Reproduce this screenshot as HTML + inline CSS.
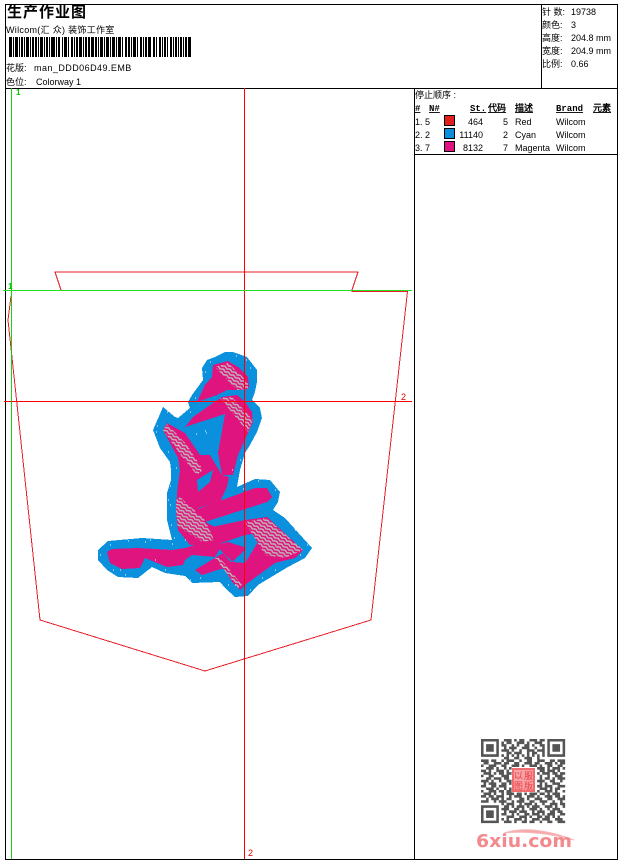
<!DOCTYPE html>
<html><head><meta charset="utf-8"><style>
html,body{margin:0;padding:0;background:#fff;width:620px;height:860px;overflow:hidden}
svg{display:block}
text{font-family:"Liberation Sans","WenQuanYi Zen Hei","Noto Sans CJK SC",sans-serif;font-size:9px;fill:#000}
.b{font-weight:bold;text-decoration:underline;font-family:"Liberation Mono","WenQuanYi Zen Hei",monospace}
</style></head><body>
<svg width="620" height="860" viewBox="0 0 620 860" xmlns="http://www.w3.org/2000/svg" shape-rendering="crispEdges">
<defs>
<pattern id="h" width="6" height="3.4" patternUnits="userSpaceOnUse" patternTransform="rotate(30)">
<rect width="6" height="3.4" fill="#e0147f"/><path d="M0 .6L3 2.2L6 .6" fill="none" stroke="#bdb4b6" stroke-width="1.5"/>
</pattern>
</defs>
<rect x="5.5" y="4.5" width="612" height="855" fill="#fff" stroke="#000"/>
<path d="M5 88.5H618M541.5 4V88M414.5 88V860M414 154.5H618" stroke="#000" fill="none"/>
<text x="7" y="17" style="font-size:15px;font-weight:bold;letter-spacing:1px;font-family:'WenQuanYi Zen Hei','Noto Sans CJK SC',sans-serif">生产作业图</text>
<text x="6" y="33" style="letter-spacing:.3px">Wilcom(汇 众) 装饰工作室</text>
<path fill="#000" d="M9 37h3v20h-3zM13 37h1v20h-1zM15 37h3v20h-3zM19 37h1v20h-1zM21 37h2v20h-2zM24 37h1v20h-1zM26 37h3v20h-3zM30 37h1v20h-1zM32 37h2v20h-2zM35 37h2v20h-2zM38 37h1v20h-1zM40 37h3v20h-3zM44 37h1v20h-1zM46 37h2v20h-2zM49 37h1v20h-1zM51 37h4v20h-4zM56 37h1v20h-1zM58 37h2v20h-2zM62 37h1v20h-1zM64 37h3v20h-3zM68 37h1v20h-1zM71 37h2v20h-2zM74 37h1v20h-1zM76 37h2v20h-2zM79 37h3v20h-3zM83 37h1v20h-1zM85 37h2v20h-2zM88 37h2v20h-2zM91 37h3v20h-3zM95 37h2v20h-2zM98 37h1v20h-1zM100 37h3v20h-3zM104 37h1v20h-1zM106 37h3v20h-3zM110 37h1v20h-1zM112 37h3v20h-3zM116 37h1v20h-1zM118 37h3v20h-3zM122 37h1v20h-1zM125 37h2v20h-2zM128 37h2v20h-2zM131 37h1v20h-1zM133 37h3v20h-3zM137 37h1v20h-1zM140 37h2v20h-2zM143 37h1v20h-1zM145 37h2v20h-2zM148 37h3v20h-3zM153 37h2v20h-2zM156 37h1v20h-1zM159 37h2v20h-2zM162 37h1v20h-1zM164 37h2v20h-2zM167 37h1v20h-1zM170 37h2v20h-2zM173 37h1v20h-1zM175 37h2v20h-2zM178 37h1v20h-1zM180 37h2v20h-2zM183 37h1v20h-1zM185 37h2v20h-2zM188 37h3v20h-3z"/>
<text x="6" y="71">花版:</text><text x="34" y="71" style="letter-spacing:.45px">man_DDD06D49.EMB</text>
<text x="6" y="85">色位:</text><text x="36" y="85">Colorway 1</text>
<text x="542" y="15">针 数:</text><text x="571" y="15">19738</text>
<text x="542" y="28">颜色:</text><text x="571" y="28">3</text>
<text x="542" y="41">高度:</text><text x="571" y="41">204.8 mm</text>
<text x="542" y="54">宽度:</text><text x="571" y="54">204.9 mm</text>
<text x="542" y="67">比例:</text><text x="571" y="67">0.66</text>
<text x="415" y="98">停止顺序 :</text>
<text class="b" x="415" y="111">#</text><text class="b" x="429" y="111">N#</text><text class="b" x="470" y="111">St.</text><text class="b" x="488" y="111">代码</text><text class="b" x="515" y="111">描述</text><text class="b" x="556" y="111">Brand</text><text class="b" x="593" y="111">元素</text>
<g>
<text x="415" y="125">1.  5</text><rect x="444.5" y="115.5" width="10" height="10" fill="#e1201e" stroke="#000"/><text x="483" y="125" text-anchor="end">464</text><text x="503" y="125">5</text><text x="515" y="125">Red</text><text x="556" y="125">Wilcom</text>
<text x="415" y="138">2.  2</text><rect x="444.5" y="128.5" width="10" height="10" fill="#0a8fdc" stroke="#000"/><text x="483" y="138" text-anchor="end">11140</text><text x="503" y="138">2</text><text x="515" y="138">Cyan</text><text x="556" y="138">Wilcom</text>
<text x="415" y="151">3.  7</text><rect x="444.5" y="141.5" width="10" height="10" fill="#df1480" stroke="#000"/><text x="483" y="151" text-anchor="end">8132</text><text x="503" y="151">7</text><text x="515" y="151">Magenta</text><text x="556" y="151">Wilcom</text>
</g>

<!-- pocket outline -->
<path d="M61 290L55 272H358L352 290V291.5H407.5L371 620L205 671L40 620L8 320L11 296" fill="none" stroke="#e8202a" stroke-width="1"/>
<!-- embroidery -->
<path fill="#0a90dc" d="M225 352L233 352L247 357L257 370L257 382L255 392L252 400L260 408L262 418L257 432L250 445L245 453L240 470L237 487L255 479L270 480L280 492L278 502L273 510L285 518L312 548L305 558L288 567L258 585L248 596L235 597L225 588L220 582L192 583L185 576L165 573L152 567L138 578L118 577L107 570L98 560L98 550L108 541L142 538L172 540L167 520L167 493L171 480L171 470L170 462L160 448L153 430L163 407L175 417L178 418L190 408L188 402L192 395L203 380L202 368L207 360L215 357Z"/>
<g fill="#e0147f">
<path d="M213 365L228 361L238 367L248 377L249 387L243 390L227 390L217 395L197 402L205 385L212 377Z"/>
<path d="M185 427L193 417L213 403L222 397L237 395L245 402L252 412L253 422L247 435L238 455L233 475L222 475L218 453L225 414Z"/>
<path d="M163 430L167 423L185 433L200 455L210 455L222 475L229 477L227 487L220 502L198 508L205 522L215 527L213 535L222 542L195 545L190 545L178 530L176 513L177 493L180 470L178 458Z"/>
<path d="M198 509L255 488L267 488L272 497L267 502L205 522Z"/>
<path d="M207 528L245 520L267 517L303 550L295 558L275 563L245 585L240 590L233 583L220 563L233 562L245 563L258 542L258 533L245 535L230 540L215 545Z"/>
<path d="M215 545L228 542L247 548L248 555L233 562L223 553Z"/>
<path d="M195 570L223 553L233 565L202 575Z"/>
<path d="M107 552L112 549L138 548L172 550L185 548L195 545L215 538L222 545L215 557L192 555L185 560L183 565L167 567L145 558L140 568L122 569L110 563Z"/>
</g>
<path fill="#0a90dc" d="M197 480L213 470L210 482L198 492ZM247 538L258 535L258 542L247 557L232 562L245 550Z"/>
<g fill="url(#h)">
<path d="M215 367L228 363L248 382L248 389L237 390Z"/>
<path d="M220 398L232 397L253 420L248 432Z"/>
<path d="M163 430L167 424L187 445L203 470L197 475L183 458Z"/>
<path d="M176 500L180 497L205 520L214 540L203 542L178 527L176 513Z"/>
<path d="M245 522L267 518L303 550L285 558L265 555Z"/>
<path d="M215 558L220 558L242 585L238 588Z"/>
</g>
<path stroke="#fff" stroke-width="1" fill="none" d="M176 468h1M157 426h1M206 433h1M246 360h1M262 417h1M120 570h1M170 505h1M290 520h1M235 585h1M145 542h1M172 352h0M210 362h1M236 356h1M250 368h1M205 372h1M195 398h1M258 400h1M190 412h1M167 412h1M156 432h1M168 452h1M178 445h1M205 431h1M196 434h1M170 486h1M168 500h1M171 525h1M174 538h1M110 545h1M128 541h1M100 555h1M113 570h1M125 575h1M155 560h1M165 570h1M190 580h1M200 578h1M228 585h1M250 590h1M262 578h1M275 570h1M300 555h1M307 545h1M295 530h1M278 512h1M275 490h1M258 481h1M243 489h1M240 460h1M232 470h1M150 540h1M172 544h1M185 540h1"/>
<!-- crosshair -->
<path d="M244.5 88V859M4 401.5H412" stroke="#f00" fill="none"/>
<path d="M11.5 88V859" stroke="#0c0" fill="none" stroke-opacity=".9"/>
<path d="M3 290.5H412" stroke="#20e020" fill="none"/>
<text x="16" y="95" style="fill:#0c0;font-size:8px;font-weight:bold">1</text>
<text x="8" y="289" style="fill:#0c0;font-size:8px;font-weight:bold">1</text>
<text x="401" y="400" style="fill:#d00;font-size:9px">2</text>
<text x="248" y="856" style="fill:#d00;font-size:9px">2</text>
<!-- QR -->
<g shape-rendering="auto">
<g transform="translate(481 739) scale(2.55)" fill="#555" stroke="none">
<path fill-rule="evenodd" d="M0 0h7v7H0zM1 1v5h5V1zM2 2h3v3H2zM26 0h7v7h-7zM27 1v5h5V1zM28 2h3v3h-3zM0 26h7v7H0zM1 27v5h5v-5zM2 28h3v3H2z"/>
<path fill="none" stroke="#555" stroke-width="1" d="M9 .5h3M13 .5h1M15 .5h2M19 .5h3M23 .5h2M8 1.5h1M10 1.5h2M14 1.5h3M18 1.5h1M21 1.5h3M8 2.5h2M12 2.5h1M14 2.5h1M17 2.5h2M20 2.5h1M23 2.5h2M9 3.5h1M11 3.5h3M16 3.5h3M21 3.5h1M24 3.5h1M8 4.5h3M12 4.5h1M15 4.5h1M18 4.5h3M22 4.5h3M10 5.5h2M13 5.5h3M18 5.5h1M20 5.5h2M24 5.5h1M8 6.5h1M10 6.5h1M12 6.5h1M14 6.5h1M16 6.5h1M18 6.5h1M20 6.5h1M22 6.5h1M24 6.5h1M9 7.5h2M13 7.5h2M17 7.5h3M22 7.5h1M0 8.5h3M4 8.5h2M8 8.5h1M10 8.5h3M15 8.5h1M18 8.5h2M22 8.5h3M27 8.5h2M30 8.5h3M1 9.5h2M5 9.5h3M9 9.5h2M13 9.5h2M17 9.5h3M21 9.5h2M25 9.5h3M29 9.5h1M31 9.5h2M0 10.5h1M3 10.5h3M8 10.5h2M12 10.5h3M16 10.5h1M19 10.5h3M23 10.5h1M26 10.5h2M30 10.5h2M2 11.5h3M6 11.5h1M9 11.5h1M11 11.5h1M22 11.5h3M26 11.5h1M28 11.5h3M32 11.5h1M0 12.5h2M3 12.5h1M6 12.5h3M10 12.5h1M23 12.5h2M26 12.5h3M30 12.5h1M1 13.5h3M5 13.5h1M7 13.5h2M10 13.5h2M22 13.5h1M24 13.5h3M28 13.5h2M31 13.5h2M0 14.5h1M3 14.5h2M8 14.5h3M23 14.5h1M26 14.5h1M29 14.5h3M2 15.5h2M5 15.5h3M9 15.5h2M23 15.5h1M25 15.5h2M28 15.5h1M30 15.5h3M0 16.5h3M4 16.5h1M7 16.5h1M10 16.5h2M22 16.5h3M27 16.5h2M31 16.5h1M1 17.5h1M3 17.5h3M8 17.5h2M11 17.5h1M23 17.5h1M25 17.5h1M28 17.5h3M0 18.5h2M4 18.5h2M7 18.5h3M22 18.5h2M25 18.5h3M30 18.5h3M2 19.5h3M6 19.5h1M9 19.5h1M11 19.5h1M23 19.5h3M27 19.5h1M29 19.5h2M0 20.5h1M3 20.5h3M7 20.5h2M10 20.5h2M22 20.5h1M25 20.5h3M29 20.5h1M32 20.5h1M1 21.5h3M5 21.5h1M8 21.5h1M10 21.5h3M14 21.5h2M17 21.5h1M19 21.5h3M23 21.5h2M26 21.5h1M28 21.5h3M0 22.5h2M3 22.5h2M6 22.5h3M11 22.5h1M13 22.5h3M18 22.5h3M22 22.5h1M25 22.5h3M29 22.5h2M32 22.5h1M2 23.5h1M4 23.5h3M8 23.5h1M10 23.5h2M15 23.5h2M18 23.5h1M21 23.5h3M26 23.5h2M30 23.5h3M0 24.5h3M5 24.5h1M7 24.5h3M12 24.5h1M14 24.5h3M19 24.5h2M23 24.5h3M28 24.5h1M31 24.5h1M8 25.5h1M10 25.5h3M15 25.5h1M17 25.5h3M21 25.5h1M24 25.5h1M27 25.5h3M31 25.5h2M9 26.5h2M12 26.5h1M14 26.5h3M18 26.5h1M20 26.5h3M25 26.5h3M29 26.5h1M32 26.5h1M8 27.5h3M13 27.5h2M16 27.5h1M19 27.5h3M23 27.5h1M26 27.5h1M28 27.5h3M9 28.5h1M11 28.5h3M15 28.5h3M20 28.5h1M22 28.5h3M27 28.5h2M30 28.5h2M8 29.5h2M12 29.5h1M14 29.5h1M17 29.5h2M20 29.5h3M24 29.5h1M26 29.5h3M31 29.5h2M10 30.5h3M15 30.5h3M19 30.5h1M22 30.5h2M25 30.5h2M28 30.5h1M30 30.5h1M8 31.5h1M10 31.5h1M13 31.5h3M17 31.5h1M20 31.5h3M24 31.5h3M29 31.5h3M9 32.5h3M13 32.5h1M16 32.5h2M19 32.5h2M23 32.5h1M26 32.5h2M30 32.5h3"/>
</g>
<rect x="512" y="768" width="23" height="24" fill="#f26a6e"/>
<rect x="514" y="770" width="19" height="20" fill="#f8a4a6"/>
<text x="514" y="779" style="font-size:9px;fill:#e8383e">以</text><text x="524" y="779" style="font-size:9px;fill:#e8383e">服</text>
<text x="514" y="789" style="font-size:9px;fill:#e8383e">图</text><text x="524" y="789" style="font-size:9px;fill:#e8383e">版</text>
<path d="M504 833Q532 824 574 840Q536 830 504 833Z" fill="#f6a8aa" stroke="#f6b8ba" stroke-width="1"/>
<text x="476" y="847" textLength="96" lengthAdjust="spacingAndGlyphs" style="font-size:18px;font-weight:bold;fill:#f4898d;font-family:'DejaVu Sans',sans-serif">6xiu.com</text>
</g>
</svg>
</body></html>
